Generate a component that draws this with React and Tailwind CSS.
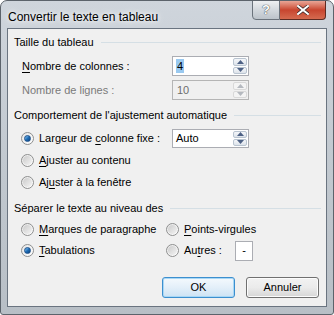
import React from "react";

const font = { fontFamily: '"Liberation Sans", Arial, sans-serif' };

function Arrow({ up, disabled }) {
  return (
    <svg width="7" height="4" viewBox="0 0 7 4">
      <path d={up ? "M0 4 L3.5 0 L7 4 Z" : "M0 0 L3.5 4 L7 0 Z"} fill={disabled ? "#b5b9bf" : "#4d6185"} />
    </svg>
  );
}

function Spinner({ disabled }) {
  const btn = disabled
    ? "flex-1 flex items-center justify-center border border-[#d9d9d9] bg-[#f4f4f4] rounded-[2px]"
    : "flex-1 flex items-center justify-center border border-[#b9c4d0] bg-gradient-to-b from-[#f5f7fa] to-[#dde3ea] rounded-[2px]";
  return (
    <div className="w-[16px] h-full flex flex-col gap-px p-px">
      <div className={btn}><Arrow up disabled={disabled} /></div>
      <div className={btn}><Arrow disabled={disabled} /></div>
    </div>
  );
}

function Radio({ checked }) {
  return (
    <div className="w-[13px] h-[13px] rounded-full border border-[#8e8f8f] bg-gradient-to-br from-[#e6e6e6] to-[#ffffff] flex items-center justify-center shrink-0">
      {checked ? (
        <div className="w-[7px] h-[7px] rounded-full bg-gradient-to-br from-[#8ccdf7] via-[#1f6fb8] to-[#0c3f7a] border border-[#1b4f8a]" />
      ) : (
        <div className="w-[9px] h-[9px] rounded-full bg-gradient-to-br from-[#cbcbcb] to-[#f4f4f4]" />
      )}
    </div>
  );
}

function GroupHeader({ children }) {
  return (
    <div className="h-[16px] flex items-center pl-[6px] pr-[5px]">
      <span>{children}</span>
      <div className="flex-1 h-px bg-[#d5dfe5] ml-[7px]" />
    </div>
  );
}

function U({ children }) {
  return <span className="underline underline-offset-[2px]">{children}</span>;
}

function RadioRow({ checked, children, className = "" }) {
  return (
    <div className={"flex items-center gap-[5px] " + className}>
      <Radio checked={checked} />
      <span>{children}</span>
    </div>
  );
}

export default function App() {
  return (
    <div className="w-[334px] h-[315px] bg-white text-[11px] text-black" style={font}>
      <div className="w-[334px] h-[315px] rounded-t-[7px] rounded-b-[3px] border border-[#5c636b] bg-gradient-to-b from-[#cfd5dc] via-[#c2c9d0] to-[#b8bfc6] flex flex-col overflow-hidden">
        {/* Title bar */}
        <div className="h-[27px] flex items-start shrink-0">
          <div className="pl-[7px] pt-[7px] text-[12px] text-black [text-shadow:0_0_8px_#ffffff,0_0_4px_#ffffff]">
            Convertir le texte en tableau
          </div>
          <div className="flex-1" />
          <div className="flex mr-[7px] -mt-px">
            <div className="w-[28px] h-[20px] border border-[#6b737c] rounded-bl-[4px] bg-gradient-to-b from-[#eef0f2] via-[#d3d8dd] to-[#bcc3ca] flex items-center justify-center text-[13px] font-bold text-white [text-shadow:0_0_1px_#3a3f45,0_0_1px_#3a3f45]">
              ?
            </div>
            <div className="w-[46px] h-[20px] border border-l-0 border-[#5e2b22] rounded-br-[4px] bg-gradient-to-b from-[#e8a596] via-[#c8452f] to-[#d56a4f] flex items-center justify-center">
              <svg width="12" height="10" viewBox="0 0 12 10">
                <path d="M1 1 L11 9 M11 1 L1 9" stroke="#3b2a2a" strokeWidth="3.4" strokeLinecap="square" />
                <path d="M1 1 L11 9 M11 1 L1 9" stroke="#ffffff" strokeWidth="2" strokeLinecap="square" />
              </svg>
            </div>
          </div>
        </div>

        {/* Client area */}
        <div className="mx-[6px] h-[279px] border border-[#6a7480] bg-[#f0f0f0] flex flex-col shrink-0">
          <div className="mt-[5px]">
            <GroupHeader>Taille du tableau</GroupHeader>
          </div>
          <div className="mt-[6px] h-[20px] flex items-center pl-[14px]">
            <span className="w-[150px]"><U>N</U>ombre de colonnes :</span>
            <div className="w-[77px] h-[20px] border border-[#abadb3] bg-white flex">
              <div className="flex-1 flex items-center pl-[3px]">
                <span className="bg-[#99c9f0] px-px leading-[14px]">4</span>
              </div>
              <Spinner />
            </div>
          </div>
          <div className="mt-[4px] h-[20px] flex items-center pl-[14px] text-[#7a7a7a]">
            <span className="w-[150px]">Nombre de lignes :</span>
            <div className="w-[77px] h-[20px] border border-[#b5b5b5] bg-[#f0f0f0] flex">
              <div className="flex-1 flex items-center pl-[4px] text-[#6d6d6d]">10</div>
              <Spinner disabled />
            </div>
          </div>

          <div className="mt-[7px]">
            <GroupHeader>Comportement de l'ajustement automatique</GroupHeader>
          </div>
          <div className="mt-[4px] h-[22px] flex items-center pl-[13px]">
            <RadioRow checked className="w-[151px]">
              Largeur de <U>c</U>olonne fixe :
            </RadioRow>
            <div className="w-[77px] h-[19px] border border-[#abadb3] bg-white flex">
              <div className="flex-1 flex items-center pl-[3px]">Auto</div>
              <Spinner />
            </div>
          </div>
          <div className="h-[22px] flex items-center pl-[13px]">
            <RadioRow><U>A</U>juster au contenu</RadioRow>
          </div>
          <div className="h-[22px] flex items-center pl-[13px]">
            <RadioRow>Aj<U>u</U>ster à la fenêtre</RadioRow>
          </div>

          <div className="mt-[7px]">
            <GroupHeader>Séparer le texte au niveau des</GroupHeader>
          </div>
          <div className="mt-[3px] h-[21px] flex items-center pl-[13px]">
            <RadioRow className="w-[145px]"><U>M</U>arques de paragraphe</RadioRow>
            <RadioRow><U>P</U>oints-virgules</RadioRow>
          </div>
          <div className="h-[21px] flex items-center pl-[13px]">
            <RadioRow checked className="w-[145px]"><U>T</U>abulations</RadioRow>
            <RadioRow className="w-[69px]">Au<U>t</U>res :</RadioRow>
            <div className="w-[18px] h-[20px] border border-[#abadb3] bg-white flex items-center justify-center">-</div>
          </div>

          <div className="mt-[16px] h-[21px] flex justify-end gap-[11px] pr-[7px]">
            <button className="w-[73px] h-[21px] rounded-[3px] border border-[#3c8fcf] bg-gradient-to-b from-[#f4f9fd] via-[#e3eff9] to-[#cde3f4] shadow-[inset_0_0_0_1px_#a8d7f5] text-[11px]" style={font}>
              OK
            </button>
            <button className="w-[73px] h-[21px] rounded-[3px] border border-[#707070] bg-gradient-to-b from-[#f2f2f2] via-[#ebebeb] to-[#d6d6d6] shadow-[inset_0_0_0_1px_#fcfcfc] text-[11px]" style={font}>
              Annuler
            </button>
          </div>
        </div>
      </div>
    </div>
  );
}
